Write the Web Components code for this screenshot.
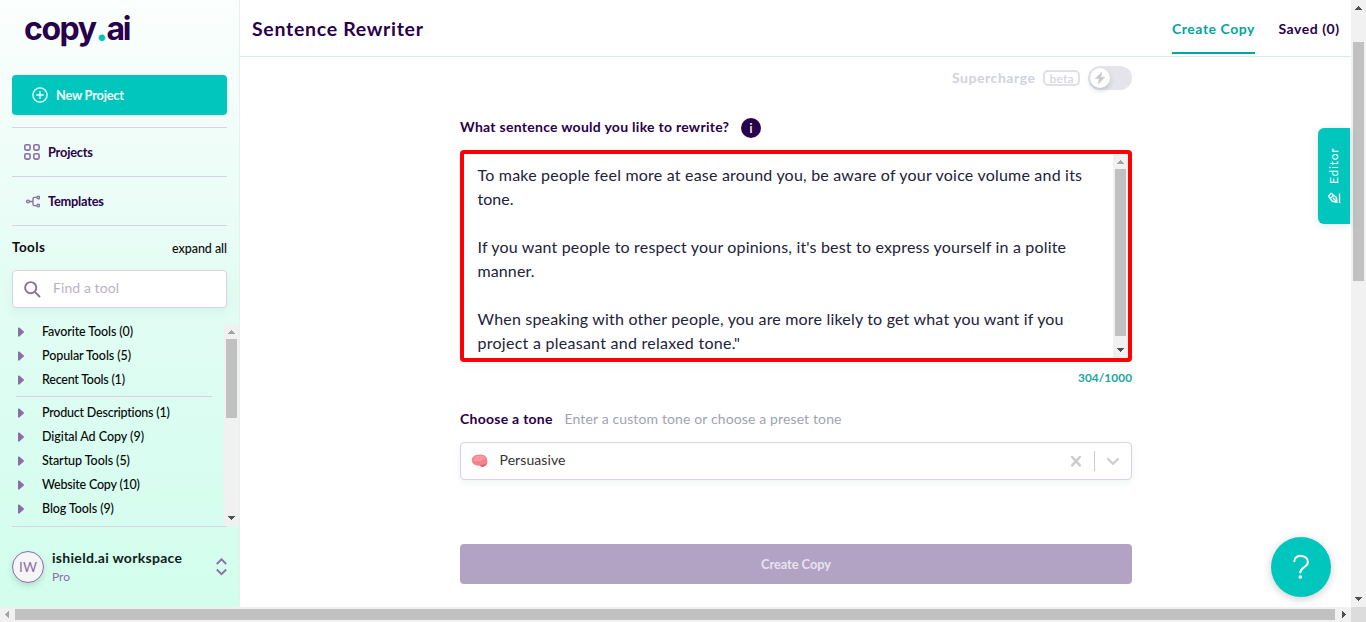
<!DOCTYPE html>
<html lang="en">
<head>
<meta charset="utf-8">
<title>Sentence Rewriter</title>
<style>
html,body{margin:0;height:622px;width:1366px;overflow:hidden;background:#fff}
body{font-family:Lato,"Liberation Sans",sans-serif;color:#22223b}
</style>
</head>
<body>
<app-window></app-window>
<script>
const define=(name,html,init)=>customElements.define(name,class extends HTMLElement{
  constructor(){super();this.attachShadow({mode:'open'}).innerHTML=typeof html==='function'?'':html}
  connectedCallback(){if(typeof html==='function')this.shadowRoot.innerHTML=html(this);if(init)init(this)}
});

/* Single line of text, tracked to fill the width in its "w" attribute. */
define('fit-text',`<style>:host{display:block;white-space:nowrap;flex:none}span{display:inline-block}</style><span><slot></slot></span>`,el=>{
  const w=+el.getAttribute('w'),s=el.shadowRoot.querySelector('span');
  const n=s.getBoundingClientRect().width,c=el.textContent.length;
  if(!w||!n)return;
  if(c>1)s.style.letterSpacing=((w-n)/(c-1)).toFixed(3)+'px';
  el.style.width=w+'px';
});

/* Classic scrollbar: from/size place the thumb, dim-start greys the first arrow. */
define('scroll-bar',el=>{
  const h=el.hasAttribute('horizontal'),a=el.getAttribute('from'),z=el.getAttribute('size');
  const c1=el.hasAttribute('dim-start')?'#a3a3a3':'#505050';
  return `<style>
  :host{display:flex;flex:none;flex-direction:${h?'row':'column'};${h?'height':'width'}:15px;background:#f1f1f1}
  svg{width:15px;height:15px;flex:none;display:block;shape-rendering:crispEdges}
  .gap{${h?'width':'height'}:${a-15}px;flex:none}
  .thumb{background:#c1c1c1;${h?'width':'height'}:${z}px;margin:${h?'2px 0':'0 2px'};flex:none}
  .fill{flex:1}</style>
  <svg><path fill="${c1}" d="${h?'M5 7.5L9 3.500V11.500z':'M4 10L7.500 6L11 10z'}"/></svg>
  <div class="gap"></div><div class="thumb"></div><div class="fill"></div>
  <svg><path fill="#505050" d="${h?'M10 7.500L6 3.500V11.500z':'M4 5L7.500 9L11 5z'}"/></svg>`;
});

define('nav-link',`<style>
:host{display:flex;height:48px;align-items:center;border-top:1px solid #dcd0e6;padding-left:12px;color:#29004b;font-weight:700;font-size:12.800px;gap:8px}
.i{width:16px;height:16px;display:flex}.x{padding-bottom:1px}</style><span class="i"><slot name="icon"></slot></span><div class="x"><slot></slot></div>`);

define('tool-item',`<style>:host{display:flex;height:24px;align-items:center;font-size:12.500px;font-weight:500;color:#060606}
svg{width:24px;height:12px;margin-right:6px}.x{padding-bottom:1px}</style>
<svg viewBox="0 0 24 12"><path d="M6.800 2.200L11.300 6L6.800 9.800z" fill="#8a6fa3" stroke="#8a6fa3" stroke-width="1.600" stroke-linejoin="round"/></svg><div class="x"><slot></slot></div>`);

define('side-bar',`<style>
:host{display:flex;flex-direction:column;width:239px;flex:none;border-right:1px solid #e3f2ed;background:linear-gradient(#fbfffd 0,#f0fdf8 140px,#e2fdf3 300px,#dafdf1 440px,#d2feed 607px)}
.logo{height:75px;box-sizing:border-box;padding:10px 0 0 24px;font:700 32px/38px Inter,sans-serif;color:#29004b;display:flex}
b{color:#00c4bc;font:900 40px/32px Lato,sans-serif}
.new{height:40px;margin:0 12px 12px;background:#00c6be;border-radius:4px;display:flex;align-items:center;padding-left:20px;gap:8px;color:#f0fdf8;font-weight:700;font-size:12.800px;width:195px}
nav{margin:0 12px;border-bottom:1px solid #dcd0e6}
.th{display:flex;justify-content:space-between;align-items:center;height:44px;margin:0 12px;color:#0b0b0b;font-size:12.500px;font-weight:500}
.th .t{font-size:13.500px;font-weight:700;padding-bottom:2px}
.search{height:36px;border:1px solid #dcd0e6;border-radius:4px;margin:0 12px;background:#fff;display:flex;align-items:center;padding-left:11px;gap:12px;color:#bbb2c6;font-size:14px;box-shadow:0 4px 10px #22806012}
.search fit-text{padding-bottom:3px}
.list{display:flex;height:206px;margin:12px 0 0 12px}
.items{flex:1}
hr{border:0;height:1px;background:#dcd0e6;margin:4px 12px 4px 4px}
scroll-bar{margin-top:4px}
.ws{margin:0 12px;border-top:1px solid #dcd0e6;height:80px;display:flex;align-items:center}
.av{width:30px;height:30px;border-radius:50%;border:1px solid #8a6fa3;background:#f5f5f7;display:flex;align-items:center;justify-content:center;color:#8a6fa3;font-size:13.500px;margin-right:8px;box-shadow:0 3px 6px #0002}
.n{flex:1}.n .a{font-size:14px;font-weight:700;color:#101c1b;line-height:18px}.n .p{font-size:12px;color:#8a6fa3;line-height:18px;padding-top:1px}
</style>
<div class="logo"><fit-text w="73">copy</fit-text><b>.</b><fit-text w="25">ai</fit-text></div>
<div class="new"><svg width="16" height="16" viewBox="0 0 16 16" fill="none" stroke="#f0fffc" stroke-width="1.400"><circle cx="8" cy="8" r="7.100"/><path d="M8 4.300v7.400M4.300 8h7.400"/></svg><fit-text w="68">New Project</fit-text></div>
<nav>
<nav-link><svg slot="icon" width="16" height="16" fill="none" stroke="#8a6fa3" stroke-width="1.600"><rect x=".8" y=".8" width="5.300" height="5.300" rx="1.500"/><rect x="9.800" y=".8" width="5.300" height="5.300" rx="1.500"/><rect x=".8" y="9.800" width="5.300" height="5.300" rx="1.500"/><rect x="9.800" y="9.800" width="5.300" height="5.300" rx="1.500"/></svg><fit-text w="45">Projects</fit-text></nav-link>
<nav-link><svg slot="icon" width="16" height="16" fill="none" stroke="#8a6fa3" stroke-width="1.400"><circle cx="4" cy="8.500" r="1.400"/><circle cx="14.200" cy="4.600" r="1.300"/><circle cx="14.200" cy="12.400" r="1.300"/><path d="M5.500 8.500H9M12.900 4.400H10.500Q9 4.400 9 6V11Q9 12.600 10.500 12.600H12.900"/></svg><fit-text w="56">Templates</fit-text></nav-link>
</nav>
<div class="th"><fit-text class="t" w="33">Tools</fit-text><fit-text w="55">expand all</fit-text></div>
<div class="search"><svg width="17" height="17" fill="none" stroke="#8a6fa3" stroke-width="1.900"><circle cx="6.700" cy="6.700" r="5.600"/><path d="M10.800 10.800L16 16"/></svg><fit-text w="66">Find a tool</fit-text></div>
<div class="list"><div class="items">
<tool-item><fit-text w="91">Favorite Tools (0)</fit-text></tool-item>
<tool-item><fit-text w="89">Popular Tools (5)</fit-text></tool-item>
<tool-item><fit-text w="83">Recent Tools (1)</fit-text></tool-item>
<hr>
<tool-item><fit-text w="128">Product Descriptions (1)</fit-text></tool-item>
<tool-item><fit-text w="102">Digital Ad Copy (9)</fit-text></tool-item>
<tool-item><fit-text w="88">Startup Tools (5)</fit-text></tool-item>
<tool-item><fit-text w="98">Website Copy (10)</fit-text></tool-item>
<tool-item><fit-text w="72">Blog Tools (9)</fit-text></tool-item>
</div><scroll-bar from="15" size="79" dim-start></scroll-bar></div>
<div class="ws"><div class="av"><fit-text>IW</fit-text></div><div class="n"><fit-text class="a" w="130">ishield.ai workspace</fit-text><fit-text class="p" w="18">Pro</fit-text></div>
<svg width="11" height="18" fill="none" stroke="#8a6fa3" stroke-width="1.800"><path d="M.8 6L5.500 1.300L10.200 6M.8 11.500L5.500 16.200L10.200 11.500"/></svg></div>`);

define('page-header',`<style>
:host{display:flex;height:56px;border-bottom:1px solid #d9efe2;padding:0 12px;color:#29004b;font-weight:700;align-items:center;gap:24px;line-height:24px;flex:none}
h1{font-size:19.500px;margin:0;flex:1;padding-top:2px}
.tab{font-size:14px;height:54px;box-sizing:border-box;border-bottom:2px solid transparent;display:flex;align-items:center;padding-top:6px;margin-bottom:2px}
.on{color:#00a6a0;border-color:#00a6a0}</style>
<h1><fit-text w="171">Sentence Rewriter</fit-text></h1><div class="tab on"><fit-text w="82.500">Create Copy</fit-text></div><div class="tab"><fit-text w="60.500">Saved (0)</fit-text></div>`);

define('super-charge',`<style>
:host{display:flex;height:24px;justify-content:flex-end;align-items:center;gap:8px;color:#d0d3dc;font-size:14px;font-weight:700}
.s{padding-bottom:2px}
.b{border:2px solid #e0e1e8;border-radius:5px;height:12px;width:33px;display:flex;align-items:center;justify-content:center;font-size:12px;font-weight:500}
.t{width:42px;height:20px;border-radius:12px;background:#e4e4ea;padding:2px 0 2px 2px}
.k{width:20px;height:20px;border-radius:50%;background:#fff;box-shadow:0 3px 5px #22505030}svg{display:block}</style>
<fit-text class="s" w="83">Supercharge</fit-text><div class="b"><fit-text w="24">beta</fit-text></div>
<div class="t"><div class="k"><svg width="20" height="20"><path fill="#c9c9cb" stroke="#c9c9cb" stroke-linejoin="round" stroke-width=".6" d="M11.800 4.200L5.300 10.600H9.300L8.300 15.900L14.800 9.200H10.800z"/></svg></div></div>`);

define('sentence-field',`<style>
:host{display:flex;height:204px;border:4px solid #fd0002;border-radius:4px;background:#fff;overflow:hidden;box-shadow:0 3px 8px #0b806012}
.t{flex:1;padding:9px 0 0 13.500px;font-size:16px;line-height:24px;color:#22223b;overflow:hidden}
.e{height:24px}</style>
<div class="t"><fit-text w="604.500">To make people feel more at ease around you, be aware of your voice volume and its</fit-text>
<fit-text w="36">tone.</fit-text><div class="e"></div>
<fit-text w="588.500">If you want people to respect your opinions, it's best to express yourself in a polite</fit-text>
<fit-text w="57">manner.</fit-text><div class="e"></div>
<fit-text w="586">When speaking with other people, you are more likely to get what you want if you</fit-text>
<fit-text w="262.500">project a pleasant and relaxed tone."</fit-text></div>
<scroll-bar from="15" size="167" dim-start></scroll-bar>`);

define('tone-select',`<style>
:host{display:flex;height:36px;border:1px solid #dcd0e6;border-radius:4px;align-items:center;padding:0 11px 0 10px;font-size:14px;color:#333;box-shadow:0 3px 9px #0b806012}
fit-text{margin-left:11.500px;padding-bottom:3px}.s{flex:1}i{width:1px;height:20px;background:#ccc;margin:0 11px 0 12px}svg{flex:none}</style>
<svg width="17" height="14" viewBox="0 0 17 14"><path fill="#f5838c" d="M1 7C0 3 4 .4 8 .7C13-.2 17 3.500 16.300 7.500C17 10 15 11.300 13.700 12C12 14 9 12.800 8.800 11.500C6 12.200 1.500 11 1 7z"/><path fill="#fba0a4" d="M2.200 5.500Q4 1.500 8 2Q12 1 14 4Q10 8 3 7z"/><path fill="#d95768" d="M9 11.300Q12 12 15.500 9Q15 11.300 13.500 12Q11 13.400 9 11.300z"/><path fill="none" stroke="#ee7c88" stroke-width=".6" d="M3 5Q5 3 6 5T9 4T12 5M3 8Q5 7 7 9T11 7T14.500 8M8 2.500L9 4M6 5V7"/></svg>
<fit-text w="66">Persuasive</fit-text><div class="s"></div>
<svg width="12" height="12" stroke="#ccc" stroke-width="2.500" stroke-linecap="round"><path d="M2.200 2L9.800 10.300M9.800 2L2.200 10.300"/></svg><i></i>
<svg width="14" height="10" fill="none" stroke="#ccc" stroke-width="2.200" stroke-linecap="round"><path d="M2 3L7 7.800L12 3"/></svg>`);

define('rewrite-form',`<style>
:host{display:block;width:672px;margin:9px 0 0 220px}
.q{display:flex;height:20px;align-items:center;gap:12px;margin:28px 0 12px;font-size:14px;font-weight:700;color:#29004b}
.q fit-text{padding-bottom:3px}.l fit-text{padding-bottom:1px}
.i{width:20px;height:20px;border-radius:50%;background:#29004b;color:#fff;display:flex;align-items:center;justify-content:center;font-size:14px;font-weight:500}
.i span{margin-top:-2px}
.c{display:flex;justify-content:flex-end;font-size:11.800px;font-weight:700;color:#17a79f;line-height:18px;margin:7px 0 22px}
.l{display:flex;height:20px;align-items:center;gap:12px;font-size:14px;color:#29004b;margin-bottom:13px}
.l .b{font-weight:700}.l .g{color:#a0a3b1}
.btn{margin-top:64px;height:40px;border-radius:4px;background:#b2a2c4;color:#e9e2f0;font-size:12.800px;font-weight:700;display:flex;align-items:center;justify-content:center}</style>
<super-charge></super-charge>
<div class="q"><fit-text w="269">What sentence would you like to rewrite?</fit-text><div class="i"><span>i</span></div></div>
<sentence-field></sentence-field>
<div class="c"><fit-text w="54">304/1000</fit-text></div>
<div class="l"><fit-text class="b" w="92.500">Choose a tone</fit-text><fit-text class="g" w="277">Enter a custom tone or choose a preset tone</fit-text></div>
<tone-select></tone-select>
<div class="btn"><fit-text w="70">Create Copy</fit-text></div>`);

define('editor-tab',`<style>
:host{position:absolute;right:1px;top:128px;width:32px;height:96px;background:#00c6be;border-radius:6px 0 0 6px;display:flex;flex-direction:column;align-items:center;box-shadow:0 2px 8px #0b806022}
span{writing-mode:vertical-rl;transform:rotate(180deg);color:#f0fffc;font-size:12px;letter-spacing:.8px;line-height:16px;margin:20px 1px 0 0;height:36px}
svg{margin:8px 1px 0 0}</style><span>Editor</span>
<svg width="14" height="13" fill="none" stroke="#f0fffc" stroke-width="1.400" stroke-linejoin="round"><path d="M12.500 1.500V11M1.500 4L4.200 1.300L9.300 5.500L10 10.300L5.200 9.300L1.500 4M3.200 6.300L6.500 3.300M5.800 5.800L7 7L10 10"/></svg>`);

define('help-button',`<style>
:host{position:absolute;right:20px;top:537px;width:60px;height:60px;border-radius:50%;background:#00c6be;box-shadow:0 2px 8px #0003}svg{display:block}</style>
<svg width="60" height="60"><path d="M23.300 24.200C23.300 17 36.900 17 36.900 25.200C36.900 30.300 29.300 29.800 29.300 35.500" fill="none" stroke="#fff" stroke-width="2.100" stroke-linecap="round"/><circle cx="29.300" cy="40" r="1.800" fill="#fff"/></svg>`);

define('app-window',`<style>
:host{display:flex;flex-direction:column;width:1366px;height:622px;overflow:hidden}
.row{display:flex;height:607px}.main{flex:1;position:relative;background:#fff}
.foot{display:flex;height:15px}.foot scroll-bar{width:1351px}.corner{width:15px;background:#dcdcdc}</style>
<div class="row"><side-bar></side-bar><div class="main"><page-header></page-header><rewrite-form></rewrite-form><editor-tab></editor-tab><help-button></help-button></div><scroll-bar from="42" size="239"></scroll-bar></div>
<div class="foot"><scroll-bar horizontal from="15" size="1320" dim-start></scroll-bar><div class="corner"></div></div>`);
</script>
</body>
</html>
